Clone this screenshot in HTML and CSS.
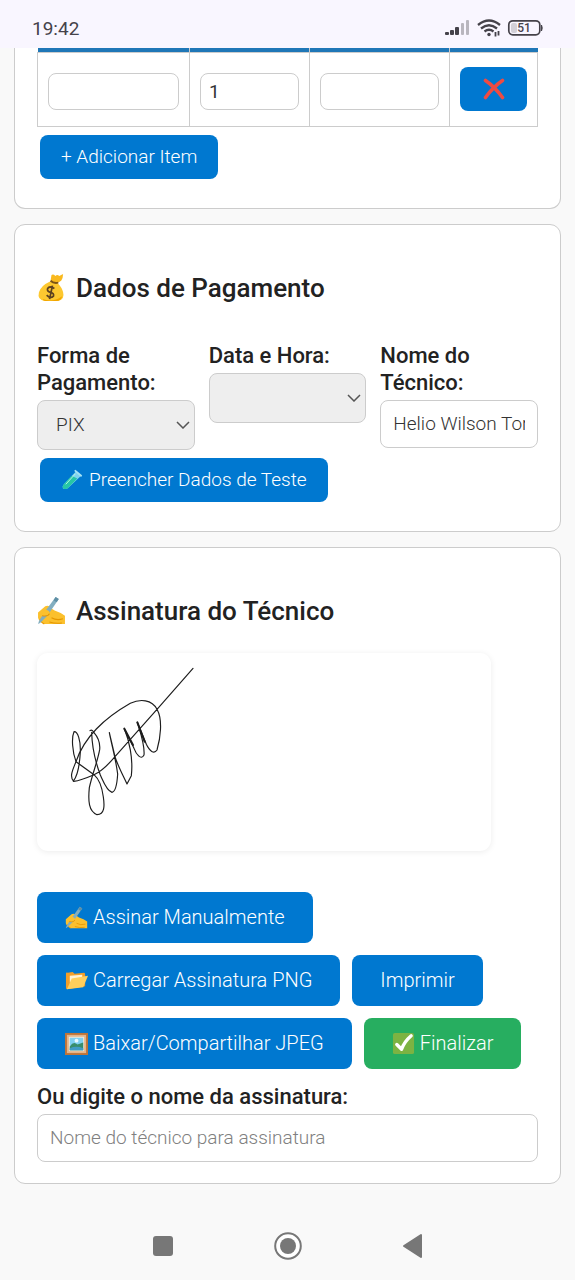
FILE: index.html
```html
<!DOCTYPE html>
<html lang="pt-BR">
<head>
<meta charset="UTF-8">
<meta name="viewport" content="width=device-width, initial-scale=1.0">
<title>Ordem de Serviço</title>
<link rel="stylesheet" href="styles.css">
</head>
<body>

<svg class="defs" aria-hidden="true">
    <symbol id="icon-write" viewBox="0 0 28 28">
        <path d="M1 16 L8 10 Q10 9 12 10 L14 12 L17 14 Q23 16 27 19 L27 27 L7 27 Q2 25 1 21 Z" fill="#fbc02d"/>
        <path d="M7 27 Q3 25 3 22 M14 21 Q19 24 25 22 M12 25 Q18 27 24 26" fill="none" stroke="#e59600" stroke-width="1"/>
        <path d="M18 1 L21 3 L10 19 L3 26 L1 27 L2 24 L7 16 Z" fill="#82aec0"/>
        <path d="M18 1 L21 3 L19 6 L16 4 Z" fill="#5e8fa5"/>
        <path d="M8 13 Q13 14 12 17 Q10 20 5 19 Q3 17 5 15 Z" fill="#fbc02d"/>
        <path d="M5 19 Q11 20 12 17" fill="none" stroke="#e59600"/>
    </symbol>
</svg>

<div class="status-bar">
    <span class="clock">19:42</span>
    <div class="status-icons">
        <svg width="26" height="18" viewBox="0 0 26 18">
            <g fill="#45424a">
                <rect x="0" y="13" width="4" height="3" rx="1"/>
                <rect x="5" y="11" width="4" height="5" rx="1"/>
                <rect x="10" y="8" width="4" height="8" rx="1"/>
            </g>
            <g fill="#b9b6be">
                <rect x="16" y="4" width="3" height="12" rx="1"/>
                <rect x="21" y="1" width="3" height="15" rx="1"/>
            </g>
        </svg>
        <svg width="24" height="18" viewBox="0 0 24 18" fill="none" stroke="#45424a" stroke-width="2.3">
            <path d="M1 6 Q12 -3 23 6"/>
            <path d="M4 9.5 Q12 3 20 9.5"/>
            <path d="M7.5 12.5 Q12 9 16.5 12.5"/>
            <circle cx="12" cy="15.5" r="1.7" fill="#45424a" stroke="none"/>
            <path d="M18.500 13 V17.500 M21.500 12 V16.500" stroke-width="1.8"/>
        </svg>
        <svg width="37" height="18" viewBox="0 0 37 18">
            <rect x="1.8" y="1.8" width="31" height="14" rx="4" fill="none" stroke="#45424a" stroke-width="1.7"/>
            <rect x="4" y="4" width="6" height="10" rx="2" fill="#d3d0d8"/>
            <path d="M34 6 H35 Q36.500 9 35 12 H34 Z" fill="#45424a"/>
            <text x="17" y="13" text-anchor="middle" class="battery-text">51</text>
        </svg>
    </div>
</div>

<div class="container">
    <div class="card card-items">
        <table class="items">
            <thead>
                <tr><th></th><th class="col-qty"></th><th class="col-value"></th><th class="col-del"></th></tr>
            </thead>
            <tbody>
                <tr>
                    <td><input type="text" aria-label="Descrição"></td>
                    <td><input type="text" value="1" aria-label="Quantidade"></td>
                    <td><input type="text" aria-label="Valor"></td>
                    <td>
                        <button type="button" class="btn-remove" aria-label="Remover">
                            <svg width="22" height="22" viewBox="0 0 22 22" fill="none" stroke="#ee4b42" stroke-width="3.6" stroke-linecap="round">
                                <path d="M2.500 2.500 Q12 9 19.500 19.500 M19.500 2.500 Q10 9 2.500 19.500"/>
                            </svg>
                        </button>
                    </td>
                </tr>
            </tbody>
        </table>
        <button type="button" class="btn">+ Adicionar Item</button>
    </div>

    <div class="card">
        <h2>
            <svg class="title-icon" viewBox="0 0 28 30">
                <path d="M14 2 Q16 1 18 3 Q20 1 22 3 L26 1 Q26 5 24 8 L19 11 L13 8 Z" fill="#f9b91e"/>
                <path d="M12 9 Q3 13 1 20 Q-1 28 7 29 L21 29 Q28 27 26 20 Q25 15 20 10 Z" fill="#fdc830"/>
                <path d="M5 27 Q15 31 25 24 Q24 29 19 29 L8 29 Q5 29 5 27" fill="#f2a600"/>
                <path d="M13 8 Q16 11 21 10" fill="none" stroke="#7c5416" stroke-width="2"/>
                <path d="M17 16 Q12 13 10 16 Q9 19 13 20 Q17 21 16 24 Q13 27 9 23 M15 13 L12 27" fill="none" stroke="#5d4120" stroke-width="1.8"/>
            </svg>
            Dados de Pagamento
        </h2>
        <div class="fields">
            <div class="field">
                <label for="formaPagamento">Forma de Pagamento:</label>
                <div class="select-box">
                    <select id="formaPagamento"><option>PIX</option></select>
                    <svg class="chevron" viewBox="0 0 14 8"><path d="M1 1 L7 7 L13 1"/></svg>
                </div>
            </div>
            <div class="field">
                <label for="dataHora">Data e Hora:</label>
                <div class="select-box">
                    <select id="dataHora"><option></option></select>
                    <svg class="chevron" viewBox="0 0 14 8"><path d="M1 1 L7 7 L13 1"/></svg>
                </div>
            </div>
            <div class="field">
                <label for="nomeTecnico">Nome do Técnico:</label>
                <input type="text" id="nomeTecnico" value="Helio Wilson Torres">
            </div>
        </div>
        <button type="button" class="btn">
            <svg class="btn-icon" viewBox="0 0 24 24">
                <path d="M16 3 L21 8 L7 21 Q4 23 2 21 Q1 19 3 17 Z" fill="#7fd3ee"/>
                <path d="M11 8 L17 11 L7 21 Q4 23 2 21 Q1 19 3 17 Z" fill="#26c6a6"/>
                <path d="M15 3 L21 8" stroke="#a5e3f5" stroke-width="2" stroke-linecap="round"/>
                <path d="M15 6 L5 17" stroke="#b8f5e6"/>
            </svg>
            Preencher Dados de Teste
        </button>
    </div>

    <div class="card">
        <h2>
            <svg class="title-icon"><use href="#icon-write"/></svg>
            Assinatura do Técnico
        </h2>
        <div class="signature">
            <svg viewBox="50 219 1362 594" fill="none" stroke="#1d1d1d" stroke-width="3.5" stroke-linecap="round" stroke-linejoin="round">
                <path d="M518 265 L410 388 L330 478 L284 530 C262 556 243 575 221 584 C198 594 176 602 160 604 C146 590 158 568 167 545 C181 503 204 472 228 447 C260 414 302 386 330 370 C359 356 395 358 410 388 C428 420 420 475 410 510 C401 523 388 514 378 493 L351 427 C361 460 374 496 371 525 C362 543 347 521 341 505 L312 446 C326 480 339 535 333 587 L320 612 C305 580 292 556 284 530 L267 458 C275 500 286 535 292 582 C290 615 286 635 275 637 C258 631 249 604 240 585 C225 545 215 500 214 457"/>
                <path d="M209 452 C214 448 218 452 221 458 C235 474 240 489 238 509 C231 547 216 581 207 623 C203 663 205 694 230 704 C253 704 253 678 249 651 C245 620 237 598 221 584 L167 545 C156 516 153 473 161 455 C172 454 181 480 180 515 C178 552 170 590 159 603"/>
                <path d="M312 446 L338 495 M351 427 L373 485" stroke-width="6"/>
            </svg>
        </div>
        <div class="actions">
            <button type="button" class="btn-action">
                <svg class="btn-icon"><use href="#icon-write"/></svg>
                Assinar Manualmente
            </button>
            <button type="button" class="btn-action">
                <svg class="btn-icon" viewBox="0 0 24 24">
                    <path d="M1 5 Q1 3 3 4 L8 3 L10 5 L20 4 Q21 4 21 6 L21 18 L2 21 Q1 21 1 19 Z" fill="#f29f29"/>
                    <path d="M5 7 L18 6 L18 12 L5 14 Z" fill="#fff3d6"/>
                    <path d="M7 10 L24 7 L19 19 L2 21 Z" fill="#ffcf5c"/>
                </svg>
                Carregar Assinatura PNG
            </button>
            <button type="button" class="btn-action">Imprimir</button>
            <button type="button" class="btn-action">
                <svg class="btn-icon" viewBox="0 0 24 24">
                    <rect x="0" y="1" width="24" height="23" fill="#bd7439"/>
                    <rect x="2" y="3" width="20" height="19" fill="#e3b58a"/>
                    <rect x="4" y="5" width="16" height="15" fill="#f5ead8"/>
                    <rect x="5" y="6" width="14" height="13" fill="#7fd0f2"/>
                    <path d="M5 15 Q9 9 13 13 L19 11 L19 19 L5 19 Z" fill="#388e6c"/>
                    <circle cx="12" cy="9" r="2" fill="#e8f8ff"/>
                    <path d="M5 17 Q12 14 19 17 L19 19 L5 19 Z" fill="#3f9bc4"/>
                </svg>
                Baixar/Compartilhar JPEG
            </button>
            <button type="button" class="btn-action btn-finish">
                <svg class="btn-icon" viewBox="0 0 24 24">
                    <rect x="1" y="1" width="22" height="22" rx="2" fill="#7cb342"/>
                    <path d="M5 13 L10 18 Q13 10 20 4" fill="none" stroke="#fff" stroke-width="3.500" stroke-linecap="round" stroke-linejoin="round"/>
                </svg>
                Finalizar
            </button>
        </div>
        <div class="field">
            <label for="nomeAssinatura">Ou digite o nome da assinatura:</label>
            <input type="text" id="nomeAssinatura" placeholder="Nome do técnico para assinatura">
        </div>
    </div>
</div>

<div class="nav-bar">
    <svg viewBox="0 0 28 28"><rect x="4" y="4" width="20" height="20" rx="3" fill="#777"/></svg>
    <svg viewBox="0 0 28 28"><circle cx="14" cy="14" r="12.8" fill="#fff" stroke="#777" stroke-width="2"/><circle cx="14" cy="14" r="8" fill="#777"/></svg>
    <svg viewBox="0 0 28 28"><path d="M5 14 L22 3 V25 Z" fill="#777" stroke="#777" stroke-width="2" stroke-linejoin="round"/></svg>
</div>

</body>
</html>
```

FILE: styles.css
```css
* {
    box-sizing: border-box;
}

body {
    margin: 0;
    background-color: #f9f9f9;
    font-family: Roboto, sans-serif;
    font-size: 19px;
    color: #222;
}

svg {
    display: block;
}

.defs {
    display: none;
}

.status-bar {
    display: flex;
    justify-content: space-between;
    align-items: center;
    height: 48px;
    padding: 8px 31px 0 32px;
    background-color: #f9f6ff;
    color: #45424a;
}

.status-icons {
    display: flex;
    align-items: center;
    gap: 6px;
}

.battery-text {
    font-size: 12px;
    font-weight: 500;
    fill: #45424a;
}

.container {
    display: flex;
    flex-direction: column;
    gap: 15px;
    padding: 0 14px;
}

.card {
    padding: 22px 22px 21px;
    background-color: white;
    border: 1px solid #ccc;
    border-radius: 11px;
}

.card-items {
    padding-top: 0;
    border-top: none;
    border-top-left-radius: 0;
    border-top-right-radius: 0;
}

h2 {
    display: flex;
    align-items: center;
    gap: 10px;
    margin: 23px 0 24px;
    font-size: 26px;
    font-weight: 500;
    line-height: 36px;
}

.title-icon {
    width: 29px;
    height: 29px;
}

.items {
    width: 100%;
    border-collapse: collapse;
    table-layout: fixed;
}

.items th {
    height: 4px;
    padding: 0;
    background-color: #1f77b7;
}

.items td {
    height: 74px;
    padding: 0 10px;
    border: 1px solid #ccc;
}

.items th + th {
    border-left: 1px solid #ccc;
}

.col-qty {
    width: 24%;
}

.col-value {
    width: 28%;
}

.col-del {
    width: 88px;
}

input,
select {
    display: block;
    width: 100%;
    border: 1px solid #ccc;
    border-radius: 8px;
    background-color: white;
    color: #333;
    font-family: inherit;
    font-size: 19px;
    font-weight: 300;
}

.items input {
    height: 37px;
    margin-top: 5px;
    padding: 0 8px;
    font-weight: 400;
}

.field input {
    height: 48px;
    padding: 0 12px;
}

input::placeholder {
    color: #808080;
}

select {
    height: 50px;
    padding: 0 36px 0 18px;
    background-color: #eee;
    appearance: none;
}

.select-box {
    position: relative;
}

.chevron {
    position: absolute;
    right: 5px;
    top: 21px;
    width: 14px;
    height: 8px;
    fill: none;
    stroke: #555;
    stroke-width: 1.5;
}

.fields {
    display: grid;
    grid-template-columns: repeat(3, 1fr);
    gap: 14px;
    margin-top: 36px;
}

label {
    display: block;
    margin-bottom: 4px;
    font-size: 22px;
    font-weight: 500;
    line-height: 27px;
}

button {
    border: none;
    border-radius: 8px;
    background-color: #0078d0;
    color: white;
    font-family: inherit;
    font-size: 19px;
    font-weight: 300;
    cursor: pointer;
}

.btn,
.btn-action {
    display: flex;
    align-items: center;
    gap: 5px;
}

.btn {
    height: 44px;
    margin: 8px 3px;
    padding: 0 21px;
}

.btn-remove {
    display: flex;
    align-items: center;
    justify-content: center;
    width: 100%;
    height: 44px;
}

.btn-icon {
    width: 23px;
    height: 23px;
}

.signature {
    width: 454px;
    max-width: 100%;
    margin-bottom: 41px;
    border-radius: 11px;
    box-shadow: 0 1px 6px rgba(0, 0, 0, 0.08);
}

.actions {
    display: flex;
    flex-wrap: wrap;
    gap: 12px;
    margin-bottom: 14px;
}

.btn-action {
    height: 51px;
    padding: 0 28px;
    font-size: 20px;
}

.btn-finish {
    background-color: #27ae60;
}

.nav-bar {
    display: flex;
    justify-content: center;
    gap: 97px;
    padding: 48px 0 16px;
}

.nav-bar svg {
    width: 28px;
    height: 28px;
}
```
